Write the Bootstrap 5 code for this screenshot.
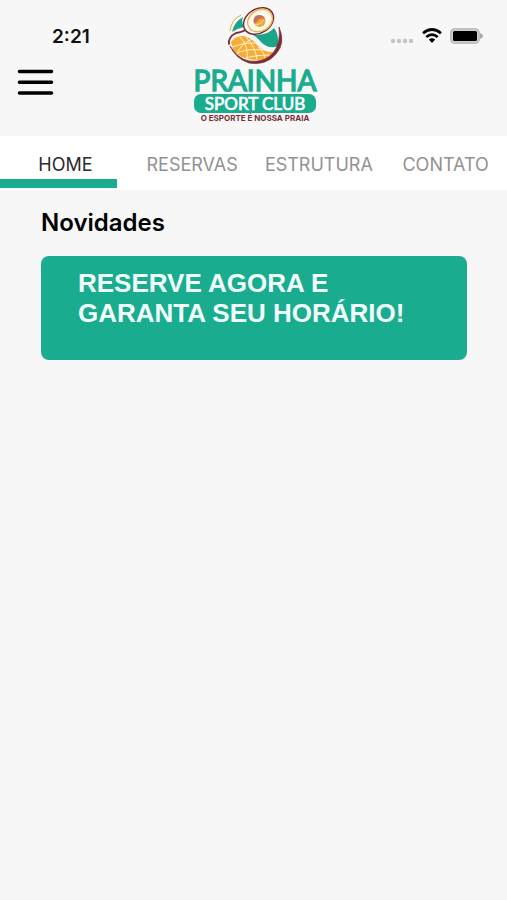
<!DOCTYPE html>
<html lang="pt-BR">
<head>
<meta charset="utf-8">
<meta name="viewport" content="width=device-width, initial-scale=1">
<title>Prainha Sport Club</title>
<link href="https://cdn.jsdelivr.net/npm/bootstrap@5.3.0/dist/css/bootstrap.min.css" rel="stylesheet">
<style>
  :root { --brand: #1aac8e; }
  body { background: #f7f7f7; color: #000; font-family: Inter, "Liberation Sans", sans-serif; }
  .app-header { padding: 4px 13px 8px 16px; }
  .clock { font-size: 19px; line-height: 24px; font-weight: 600; padding: 21px 0 0 36px; color: #111; }
  .menu-btn { margin-top: 19px; line-height: 0; }
  .status-icons { padding: 22px 11px 0 0; gap: 8px; }
  .tabs-bar { background: #fff; height: 54px; }
  .tabs-bar .nav-link { color: #929292; font-size: 18px; line-height: 24px; padding: 17px 0 0 4px; height: 52px; border-radius: 0; }
  .tabs-bar .nav-link.active { color: #2b2b2b; }
  .tabs-bar .nav-link.active::after { content: ""; display: block; width: 95%; height: 9px; margin: 2px 0 0 -4px; background: var(--brand); }
  .news { padding: 18px 40px 0 41px; }
  .news-title { font-size: 24px; line-height: 30px; font-weight: 600; margin-bottom: 18px; }
  .promo { background: var(--brand); border-radius: 8px; min-height: 104px; padding: 12px 37px; color: #f0fffc; font: 700 26px/30px "Liberation Sans", Arial, sans-serif; }
</style>
</head>
<body>
<header class="app-header d-flex">
  <div class="col">
    <div class="clock">2:21</div>
    <button class="menu-btn btn p-0 border-0" type="button" aria-label="Menu">
      <svg width="39" height="32" viewBox="0 0 39 32" fill="none" stroke="#000" stroke-width="3.6" stroke-linecap="round"><path d="M3.5 3.5H35.5M3.5 14.2H35.5M3.5 25H35.5"/></svg>
    </button>
  </div>
  <svg class="flex-shrink-0" width="130" height="124" viewBox="190 4 130 124" role="img" aria-label="Prainha Sport Club">
    <path d="M243 17Q234 22 232 32Q238 28 244 27Q241 22 243 17Z" fill="#1aa58b"/>
    <path d="M251 34Q266 37 274 28Q279 34 278 46Q269 50 261 42Q256 36 251 34Z" fill="#1aa58b"/>
    <path d="M231 42Q236 35 244 36Q252 38 257 45Q264 53 274 52Q267 60 259 60Q240 60 233 50Z" fill="#f6ad38"/>
    <g fill="none" stroke="#fff0cc" stroke-width="1">
      <path d="M232 47Q244 42 255 43M235 54Q247 48 263 50M243 59Q253 55 271 55"/>
      <path d="M240 37Q249 46 247 60M246 37Q256 48 257 60M258 47Q265 52 265 59M252 39Q239 45 237 55"/>
    </g>
    <path d="M241 15Q231 20 230 31" fill="none" stroke="#f3a43c" stroke-width="1"/>
    <path d="M279 27Q286 43 276 54Q266 66 249 63Q236 59 230 46Q238 59 249 61Q264 63 273 53Q281 43 279 27Z" fill="#792f32" stroke="#792f32" stroke-width=".7"/>
    <path d="M229 44Q228 37 236 33Q243 32 247 29" fill="none" stroke="#792f32" stroke-width="1.8" stroke-linecap="round"/>
    <ellipse cx="258.500" cy="21" rx="16" ry="12" transform="rotate(-32 258.500 21)" fill="#fff" stroke="#792f32" stroke-width="1.5"/>
    <ellipse cx="260" cy="20.500" rx="13" ry="10.500" transform="rotate(-32 260 20.500)" fill="#fffaf0" stroke="#f3b04c" stroke-width="1.4"/>
    <circle cx="259.500" cy="21" r="6" fill="#efa637"/>
    <path d="M254 23Q252 17 258 15Q264 15 265 19Q261 17 258 20Q256 24 254 23Z" fill="#c4715d"/>
    <path d="M255 25Q260 25 264 20" fill="none" stroke="#fff1ca" stroke-width=".7"/>
    <text x="255" y="91" text-anchor="middle" fill="#1aac8e" stroke="#1aac8e" stroke-width="1.4" font-family="Lato, sans-serif" font-size="28" font-weight="400">PRAINHA</text>
    <rect x="194" y="94" width="122" height="19" rx="7" fill="#1aac8e"/>
    <text x="255" y="110" text-anchor="middle" fill="#fff" stroke="#fff" stroke-width=".7" font-family="Lato, sans-serif" font-size="17" font-weight="400">SPORT CLUB</text>
    <text x="255" y="121" text-anchor="middle" fill="#792f32" font-family="Inter, sans-serif" font-size="8" font-weight="700">O ESPORTE É NOSSA PRAIA</text>
  </svg>
  <div class="col">
    <div class="status-icons d-flex justify-content-end align-items-start">
      <svg width="24" height="20" viewBox="0 0 24 20" fill="#c4c4c4" aria-hidden="true"><circle cx="3" cy="15" r="2.2"/><circle cx="9" cy="15" r="2.2"/><circle cx="15" cy="15" r="2.2"/><circle cx="21" cy="15" r="2.2"/></svg>
      <svg width="20" height="20" viewBox="0 0 20 20" fill="none" stroke="#000" stroke-width="2.7" aria-hidden="true"><path d="M1 7.300Q10-.3 19 7.300M4.300 11Q10 6.200 15.700 11"/><path d="M6.800 13.500Q10 11 13.200 13.500L10 17Z" fill="#000" stroke="none"/></svg>
      <svg width="33" height="20" viewBox="0 0 33 20" aria-hidden="true"><rect x=".8" y="2.800" width="28.400" height="14.400" rx="4" fill="#d0d0d0" stroke="#b4b4b4" stroke-width="1.3"/><rect x="3" y="5" width="24" height="10" rx="1.5"/><path d="M30 7Q33 8 33 10T30 13Z" fill="#aaa"/></svg>
    </div>
  </div>
</header>
<nav class="tabs-bar nav nav-justified flex-nowrap" aria-label="Principal">
  <a class="nav-link active col" aria-current="page" href="#home">HOME</a>
  <a class="nav-link col" href="#reservas">RESERVAS</a>
  <a class="nav-link col" href="#estrutura">ESTRUTURA</a>
  <a class="nav-link col" href="#contato">CONTATO</a>
</nav>
<main class="news" id="home">
  <h1 class="news-title">Novidades</h1>
  <a class="promo d-block text-decoration-none" href="#reservas">RESERVE AGORA E<br>GARANTA SEU HORÁRIO!</a>
</main>
<script src="https://cdn.jsdelivr.net/npm/bootstrap@5.3.0/dist/js/bootstrap.bundle.min.js"></script>
</body>
</html>
